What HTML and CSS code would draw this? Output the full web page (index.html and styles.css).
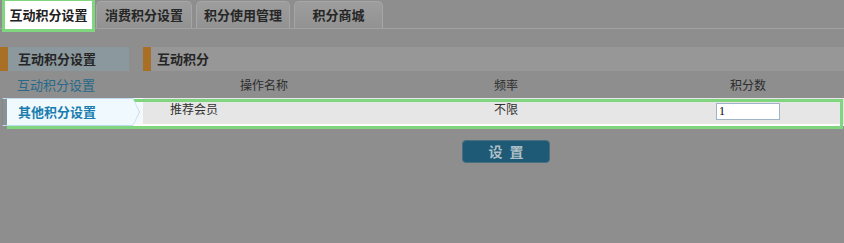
FILE: index.html
```html
<!DOCTYPE html>
<html lang="zh-CN">
<head>
<meta charset="utf-8">
<title>互动积分设置</title>
<link rel="stylesheet" href="styles.css">
</head>
<body>
<div class="tabs">
  <div class="tab tab-active">互动积分设置</div>
  <div class="tab tab-w96">消费积分设置</div>
  <div class="tab tab-w94">积分使用管理</div>
  <div class="tab tab-w89">积分商城</div>
</div>
<div class="main">
  <aside class="side">
    <div class="side-head">互动积分设置</div>
    <div class="side-item">互动积分设置</div>
    <div class="side-item current">其他积分设置</div>
  </aside>
  <section class="content">
    <div class="content-head">互动积分</div>
    <div class="grid-row head-row">
      <div class="cell">操作名称</div>
      <div class="cell">频率</div>
      <div class="cell">积分数</div>
    </div>
    <div class="grid-row data-row">
      <div class="cell cell-left">推荐会员</div>
      <div class="cell">不限</div>
      <div class="cell"><input class="score" type="text" value="1"></div>
    </div>
    <button class="submit" type="button">设 置</button>
  </section>
</div>
<div class="spot-row"></div>
</body>
</html>
```
FILE: styles.css
```css
html, body {
  margin: 0;
  padding: 0;
}
body {
  width: 844px;
  height: 243px;
  overflow: hidden;
  position: relative;
  background: #8e8e8e;
  font-family: "Noto Sans CJK SC", "Noto Sans", sans-serif;
  color: #2a2a2a;
}

/* tabs */
.tabs {
  display: flex;
  align-items: flex-end;
  gap: 4px;
  height: 28px;
  padding-left: 5px;
  border-bottom: 1px solid #a2a2a2;
}
.tab {
  box-sizing: border-box;
  height: 27px;
  line-height: 26px;
  text-align: center;
  font-size: 13px;
  font-weight: bold;
  color: #262626;
  border: 1px solid #a6a6a6;
  border-bottom: none;
  border-radius: 5px 5px 0 0;
  background: linear-gradient(#9d9d9d, #929292);
}
.tab-w96 { width: 96px; }
.tab-w94 { width: 94px; }
.tab-w89 { width: 89px; }
.tab-active {
  width: 87px;
  height: 28px;
  line-height: 28px;
  margin-bottom: -1px;
  border: none;
  border-radius: 0;
  background: #ffffff;
  color: #222222;
  outline: 3px solid #7fd67f;
  position: relative;
  z-index: 1;
}

/* main */
.main {
  display: flex;
  width: 869px;
  margin-top: 18px;
}
.side {
  flex: none;
  width: 133px;
}
.side-head {
  box-sizing: border-box;
  width: 129px;
  height: 24px;
  line-height: 24px;
  padding-left: 10px;
  border-left: 8px solid #a86f25;
  background: #8b989e;
  font-size: 13px;
  font-weight: bold;
  color: #262626;
}
.side-item {
  height: 27px;
  line-height: 28px;
  padding-left: 17px;
  font-size: 13px;
  color: #26698a;
}
.side-item.current {
  position: relative;
  z-index: 1;
  box-sizing: border-box;
  margin-left: 2px;
  width: 131px;
  height: 28px;
  line-height: 26px;
  padding-left: 15px;
  border: 1px solid #bcdcee;
  border-left-color: #7d878c;
  border-right: none;
  background: linear-gradient(90deg, #899397 0 4px, #f0f9fd 4px);
  font-weight: bold;
  color: #1a7db0;
}
.side-item.current::before,
.side-item.current::after {
  content: "";
  position: absolute;
  width: 0;
  height: 0;
  left: 100%;
  border-style: solid;
  border-color: transparent;
}
.side-item.current::before {
  top: -1px;
  border-width: 14px 0 14px 7px;
  border-left-color: #bcdcee;
}
.side-item.current::after {
  top: 0;
  border-width: 13px 0 13px 6px;
  border-left-color: #f0f9fd;
}

.content {
  flex: none;
  width: 726px;
  margin-left: 10px;
}
.content-head {
  height: 24px;
  line-height: 24px;
  padding-left: 6px;
  border-left: 8px solid #a86f25;
  background: #979797;
  font-size: 13px;
  font-weight: bold;
  color: #262626;
}
.grid-row {
  display: grid;
  grid-template-columns: repeat(3, 242px);
  align-items: center;
  font-size: 12px;
}
.head-row {
  height: 27px;
  color: #2d2d2d;
}
.data-row {
  height: 26px;
  margin-left: -10px;
  padding-left: 10px;
  border-bottom: 2px solid #ffffff;
  background: linear-gradient(90deg, #f5f9fb 0 10px, #e6e6e6 10px);
  color: #333333;
}
.cell {
  text-align: center;
  line-height: 16px;
}
.head-row .cell {
  padding-top: 1px;
}
.data-row .cell {
  padding-bottom: 4px;
}
.data-row .cell:last-child {
  padding-bottom: 0;
  padding-top: 1px;
}
.cell-left {
  text-align: left;
  padding-left: 27px;
}
.score {
  box-sizing: border-box;
  display: block;
  margin: 0 auto;
  width: 64px;
  height: 17px;
  padding: 0 2px;
  border: 1px solid #9fb4c9;
  background: #ffffff;
  font-family: "Liberation Serif", serif;
  font-size: 12px;
  color: #000000;
}
.submit {
  display: block;
  box-sizing: border-box;
  width: 88px;
  height: 23px;
  margin: 14px auto 0;
  padding: 0 0 0 2px;
  border: 1px solid #46707f;
  border-radius: 4px;
  background: #1e5975;
  font-family: "Noto Sans CJK SC", sans-serif;
  font-size: 14px;
  font-weight: bold;
  letter-spacing: 2px;
  line-height: 21px;
  color: #aebfc8;
}

/* highlight box drawn over the menu item and row */
.spot-row {
  position: absolute;
  left: 7px;
  top: 99px;
  box-sizing: border-box;
  width: 836px;
  height: 30px;
  border: 3px solid #7fd67f;
  pointer-events: none;
}
```
